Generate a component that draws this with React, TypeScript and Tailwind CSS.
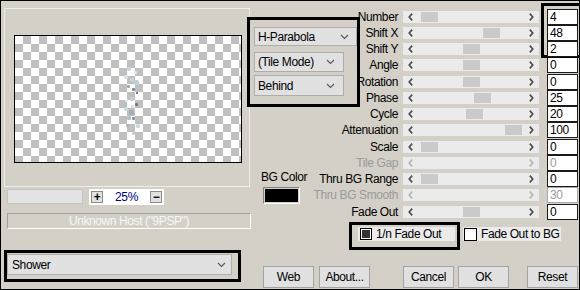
import React from "react";

type Param = { label: string; value: string; thumb?: number; disabled?: boolean };

const PARAMS: Param[] = [
  { label: "Number", value: "4", thumb: 18 },
  { label: "Shift X", value: "48", thumb: 80 },
  { label: "Shift Y", value: "2", thumb: 60 },
  { label: "Angle", value: "0", thumb: 60 },
  { label: "Rotation", value: "0", thumb: 60 },
  { label: "Phase", value: "25", thumb: 71 },
  { label: "Cycle", value: "20", thumb: 63 },
  { label: "Attenuation", value: "100", thumb: 102 },
  { label: "Scale", value: "0", thumb: 18 },
  { label: "Tile Gap", value: "0", disabled: true },
  { label: "Thru BG Range", value: "0", thumb: 18 },
  { label: "Thru BG Smooth", value: "30", disabled: true },
  { label: "Fade Out", value: "0", thumb: 60 },
];

// sparkle blobs of the shower preview: x, y, size, colour
const DOTS: [number, number, number, string][] = [
  [11, 0, 3, "#b3bcbf"],
  [6, 6, 4, "#c4d7de"],
  [3, 14, 4, "#d2e2e8"],
  [9, 17, 4, "#c8d4d8"],
  [13, 19, 5, "#bcd2da"],
  [6, 24, 3, "#8fabb4"],
  [11, 27, 3, "#7a8b91"],
  [15, 31, 2, "#4f6b75"],
  [9, 36, 4, "#c1d1d6"],
  [14, 42, 3, "#6a7a80"],
  [3, 46, 4, "#c6dbe3"],
  [8, 49, 5, "#9fb1b7"],
  [6, 55, 4, "#b0c2c8"],
  [11, 56, 3, "#8597a0"],
  [5, 63, 3, "#a5b2b6"],
  [15, 63, 4, "#c9dde4"],
  [11, 71, 3, "#c4cdd0"],
  [4, 38, 3, "#dfeaee"],
  [13, 10, 3, "#d8e6eb"],
  [10, 44, 3, "#d3e0e4"],
];

function Chevron() {
  return (
    <svg width="9" height="6" viewBox="0 0 9 6">
      <path d="M1 1 L4.5 4.5 L8 1" fill="none" stroke="#5a5a5a" strokeWidth="1.2" />
    </svg>
  );
}

function Dropdown({ label, w, h = 20, pr = 8 }: { label: string; w: string; h?: number; pr?: number }) {
  return (
    <div
      className={`${w} flex items-center justify-between bg-[#e1e1e1] border border-[#adadad] pl-[3px]`}
      style={{ height: h, paddingRight: pr }}
    >
      <span>{label}</span>
      <Chevron />
    </div>
  );
}

function Arrow({ dir, disabled }: { dir: "l" | "r"; disabled?: boolean }) {
  return (
    <svg width="5" height="8" viewBox="0 0 5 8" className="shrink-0">
      <path
        d={dir === "l" ? "M4.2 0.6 L1.2 4 L4.2 7.4" : "M0.8 0.6 L3.8 4 L0.8 7.4"}
        fill="none"
        stroke={disabled ? "#b4b4b4" : "#4a4a4a"}
        strokeWidth="1.6"
      />
    </svg>
  );
}

function Button({ label, className = "" }: { label: string; className?: string }) {
  return (
    <div
      className={`w-[51px] h-[22px] flex items-center justify-center bg-[#e1e1e1] border border-[#a3a3a3] ${className}`}
    >
      {label}
    </div>
  );
}

export default function App() {
  return (
    <div className="w-[580px] h-[290px] bg-[#d4d0c8] border border-black flex overflow-hidden text-[12px] tracking-[-0.4px] leading-[14px] text-black font-['Liberation_Sans',Arial,sans-serif]">
      {/* Left: preview */}
      <div className="w-[246px] shrink-0 flex flex-col">
        <div className="ml-[3px] mt-[7px] w-[246px] h-[179px] shrink-0 border border-[#efede9]">
          <div className="ml-[9px] mt-[26px] w-[228px] h-[128px] border border-black bg-[image:conic-gradient(#c0c0c0_25%,#ffffff_0_50%,#c0c0c0_0_75%,#ffffff_0)] bg-[length:16px_16px] flex items-center justify-center">
            <svg width="20" height="76" viewBox="0 0 20 76" className="ml-[6px]">
              {DOTS.map(([x, y, s, c], i) => (
                <rect key={i} x={x} y={y} width={s} height={s} rx={s / 3} fill={c} />
              ))}
            </svg>
          </div>
        </div>

        <div className="mt-[2px] h-[16px] flex">
          <div className="ml-[6px] w-[76px] h-[15px] bg-[#e3e3e3] border border-[#c4c4c4]" />
          <div className="ml-[6px] w-[75px] h-[16px] bg-white flex items-center px-[2px]">
            <div className="w-[12px] h-[12px] bg-[#e1e1e1] border border-[#8c8c8c] flex items-center justify-center font-bold text-[12px] leading-none">
              +
            </div>
            <span className="flex-1 text-center text-[#000080]">25%</span>
            <div className="w-[12px] h-[12px] bg-[#e1e1e1] border border-[#8c8c8c] flex items-center justify-center font-bold text-[12px] leading-none">
              −
            </div>
          </div>
        </div>

        <div className="mt-[8px] ml-[6px] w-[244px] h-[16px] shrink-0 border border-t-[#a0a0a0] border-l-[#a0a0a0] border-b-white border-r-white flex items-center justify-center text-[#f7f7f7]">
          Unknown Host ("9PSP")
        </div>

        <div className="mt-[21px] ml-[3px] w-[237px] h-[32px] shrink-0 border-[3px] border-black pt-[1px]">
          <div className="w-[225px] h-[21px] flex items-center justify-between bg-[#e1e1e1] border border-[#adadad] pl-[4px] pr-[5px]">
            <span>Shower</span>
            <Chevron />
          </div>
        </div>
      </div>

      {/* Right area */}
      <div className="flex-1 flex flex-col">
        <div className="flex h-[219px]">
          {/* Middle column */}
          <div className="w-[113px] shrink-0 mr-[-60px] relative z-10 flex flex-col">
            <div className="mt-[16px] w-[113px] h-[90px] border-[3px] border-black flex flex-col pl-[4px] pt-[7px]">
              <Dropdown label="H-Parabola" w="w-[103px]" h={19} pr={7} />
              <div className="mt-[6px]">
                <Dropdown label="(Tile Mode)" w="w-[90px]" />
              </div>
              <div className="mt-[3px]">
                <Dropdown label="Behind" w="w-[90px]" h={21} />
              </div>
            </div>
            <div className="mt-[63px] ml-[14px]">BG Color</div>
            <div className="mt-[3px] ml-[16px] w-[37px] h-[17px] border border-t-[#808080] border-l-[#808080] border-b-white border-r-white p-[1px]">
              <div className="w-full h-full bg-black" />
            </div>
          </div>

          {/* Parameters */}
          <div className="flex flex-col pt-[7.5px]">
            {PARAMS.map((p, i) => (
              <div key={p.label} className="h-[16.25px] flex items-center">
                <div className={`w-[98px] text-right whitespace-nowrap ${p.disabled ? "text-[#9a9a9a]" : ""}`}>
                  {p.label}
                </div>
                <div className="ml-[5px] w-[136px] h-[12px] bg-[#ebebeb] flex items-center">
                  <div className="ml-[5px]">
                    <Arrow dir="l" disabled={p.disabled} />
                  </div>
                  <div className="flex-1 flex items-center">
                    {p.thumb !== undefined && (
                      <div className="w-[17px] h-[10px] bg-[#cacaca]" style={{ marginLeft: p.thumb - 10 }} />
                    )}
                  </div>
                  <div className="mr-[5px]">
                    <Arrow dir="r" disabled={p.disabled} />
                  </div>
                </div>
                <div
                  className={`ml-[8px] w-[31px] h-[16px] bg-white border pl-[2px] leading-[14px] ${
                    i < 3 ? "relative" : ""
                  } ${p.label === "Thru BG Smooth" ? "border-[#a8a8a8] text-[#9a9a9a]" : "border-[#1a1a1a]"} ${
                    p.disabled ? "text-[#9a9a9a]" : ""
                  }`}
                >
                  {p.value}
                  {i === 0 && (
                    <div className="absolute left-[-7px] top-[-7px] w-[45px] h-[55px] border-[3px] border-black pointer-events-none" />
                  )}
                </div>
              </div>
            ))}
          </div>
        </div>

        {/* Checkboxes */}
        <div className="mt-[2px] flex items-start">
          <div className="ml-[102px] w-[111px] h-[28px] border-[3px] border-black pl-[6px] pt-[2px]">
            <div className="w-[97px] h-[14px] bg-[#ebebeb] flex items-center pl-[2px]">
              <div className="w-[12px] h-[12px] border border-black bg-white p-[1px]">
                <div className="w-full h-full bg-[#333333]" />
              </div>
              <span className="ml-[4px]">1/n Fade Out</span>
            </div>
          </div>
          <div className="ml-[3px] mt-[5px] w-[98px] h-[14px] bg-[#ebebeb] flex items-center pl-[1px]">
            <div className="w-[13px] h-[13px] border border-black bg-white" />
            <span className="ml-[4px]">Fade Out to BG</span>
          </div>
        </div>

        {/* Buttons */}
        <div className="mt-[16px] flex">
          <Button label="Web" className="ml-[16px]" />
          <Button label="About..." className="ml-[5px]" />
          <Button label="Cancel" className="ml-[33px]" />
          <Button label="OK" className="ml-[4px]" />
          <Button label="Reset" className="ml-[18px]" />
        </div>
      </div>
    </div>
  );
}
